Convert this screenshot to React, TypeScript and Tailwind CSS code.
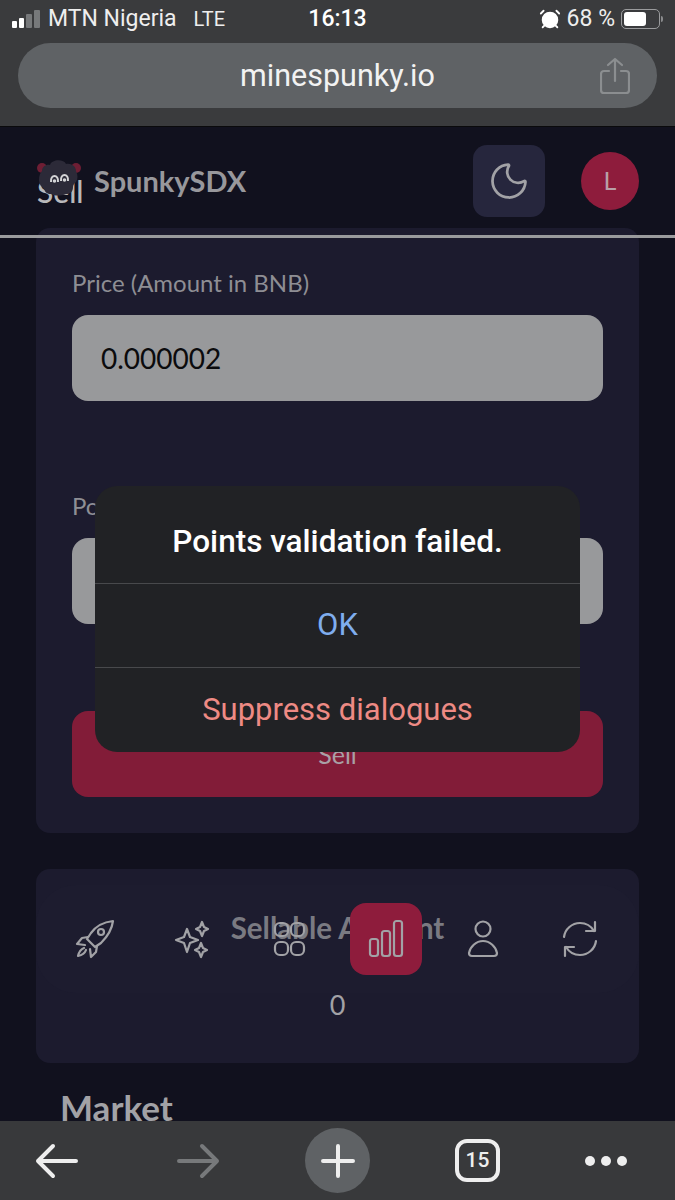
import { AlarmClock, Moon } from "lucide-react";

const ios = "font-['Roboto',sans-serif]";
const app = "font-['Lato',sans-serif]";

function Signal() {
  return (
    <div className="flex items-end gap-[2px]">
      <span className="h-[7px] w-[5px] rounded-[1px] bg-white" />
      <span className="h-[10px] w-[5px] rounded-[1px] bg-white" />
      <span className="h-[14px] w-[6px] rounded-[1px] bg-[#77797b]" />
      <span className="h-[18px] w-[6px] rounded-[1px] bg-[#77797b]" />
    </div>
  );
}

function Battery() {
  return (
    <div className="flex items-center gap-[1px]">
      <div className="flex h-[20px] w-[39px] items-center rounded-[5px] border border-[#9a9b9d] p-[2px]">
        <div className="h-full w-[68%] rounded-[3px] bg-white" />
      </div>
      <span className="h-[6px] w-[2px] rounded-r-sm bg-[#8a8b8d]" />
    </div>
  );
}

function ShareIcon() {
  return (
    <svg width="30" height="38" viewBox="0 0 30 38" fill="none" stroke="#8b8e90" strokeWidth="2.2" strokeLinecap="round" strokeLinejoin="round">
      <path d="M9 14H4a3 3 0 0 0-3 3v16a3 3 0 0 0 3 3h22a3 3 0 0 0 3-3V17a3 3 0 0 0-3-3h-5" />
      <path d="M15 24V2M8 8l7-6 7 6" />
    </svg>
  );
}

// the "Sell" word pokes out from under the sheep in the reference
function Logo() {
  return (
    <div className="relative h-[46px] w-[46px]">
      <span className={`${app} absolute -bottom-[2px] left-[1px] text-[30px] font-medium leading-none text-[#b9b9bb]`}>Sell</span>
      <svg className="absolute left-0 top-0" width="46" height="46" viewBox="0 0 46 46">
        <circle cx="6" cy="10" r="5" fill="#6e1e34" />
        <circle cx="40" cy="10" r="5" fill="#6e1e34" />
        <path d="M6 13c0-5 5-7 8-6 2-6 14-6 16-1 5-1 10 2 10 7 2 4 2 8 0 11-2 2-3 3-3 5 0 5-3 7-7 7-5 2-11 2-15 0-4 0-6-2-7-5-3-2-5-5-5-9 0-4 1-7 3-9z" fill="#2c2a38" />
        <path d="M15 24c-1-8 8-8 7 0M25 23c-1-8 8-8 7 0" fill="none" stroke="#d4d4d6" strokeWidth="2" />
        <circle cx="18.5" cy="23" r="1.8" fill="#d4d4d6" />
        <circle cx="28.5" cy="22" r="1.8" fill="#d4d4d6" />
      </svg>
    </div>
  );
}

function NavIcon({ children }: { children: React.ReactNode }) {
  return (
    <svg width="40" height="40" viewBox="0 0 40 40" fill="none" stroke="#a2a2a6" strokeWidth="2.2" strokeLinecap="round" strokeLinejoin="round">
      {children}
    </svg>
  );
}

const navItems = [
  <NavIcon key="rocket">
    <path d="M38 2c-9 1-17 5-22 12l-4 6 8 8 6-4c6-6 11-14 12-22z" />
    <circle cx="26" cy="13" r="3" />
    <path d="M13 18l-6 1-5 6 8 1M22 27l-1 6-5 5-1-8M9 29c-3 1-5 4-6 8 4-1 7-3 8-6" />
  </NavIcon>,
  <NavIcon key="sparkles">
    <path d="M15 10l3 8 8 3-8 3-3 9-3-9-8-3 8-3 3-8z" />
    <path d="M30 3l2 5 4 2-4 2-2 5-2-5-4-2 4-2 2-5z" />
    <path d="M29 24l2 5 4 2-4 2-2 5-2-5-4-2 4-2 2-5z" />
  </NavIcon>,
  <NavIcon key="grid">
    <rect x="6" y="4" width="13" height="13" rx="5" />
    <rect x="22" y="4" width="13" height="13" rx="5" />
    <rect x="6" y="23" width="13" height="13" rx="5" />
    <rect x="22" y="23" width="13" height="13" rx="5" />
  </NavIcon>,
  <NavIcon key="chart">
    <rect x="4" y="20" width="8" height="17" rx="2.5" />
    <rect x="16" y="12" width="8" height="25" rx="2.5" />
    <rect x="28" y="2" width="8" height="35" rx="2.5" />
  </NavIcon>,
  <NavIcon key="user">
    <circle cx="20" cy="10" r="7.5" />
    <path d="M20 22c-7 0-13 6-14 12 0 2 1 3 3 3h22c2 0 3-1 3-3-1-6-7-12-14-12z" />
  </NavIcon>,
  <NavIcon key="refresh">
    <path d="M4 18C5 10 12 4 20 4c6 0 11 3 14 8" />
    <path d="M35 3v9h-9" />
    <path d="M36 22c-1 8-8 14-16 14-6 0-11-3-14-8" />
    <path d="M5 37v-9h9" />
  </NavIcon>,
];

function Field({ label, value }: { label: string; value: string }) {
  return (
    <div>
      <div className={`${app} h-[28px] text-[24px] leading-[28px] text-[#8e8e94]`}>{label}</div>
      <div className="mt-[18px] flex h-[86px] items-center rounded-[16px] bg-[#98999b] px-[29px]">
        <span className={`${app} text-[28px] text-[#0b0b0d]`}>{value}</span>
      </div>
    </div>
  );
}

function Dialog() {
  return (
    <div className={`${ios} absolute left-[95px] top-[486px] flex h-[266px] w-[485px] flex-col rounded-[22px] bg-[#212225]`}>
      <div className="flex h-[98px] items-center justify-center border-b border-[#48494c] pt-[15px] text-[31.5px] font-medium text-white">
        Points validation failed.
      </div>
      <div className="flex h-[84px] items-center justify-center border-b border-[#48494c] text-[31px] text-[#7fadee]">
        OK
      </div>
      <div className="flex flex-1 items-center justify-center text-[31px] text-[#ee8a84]">Suppress dialogues</div>
    </div>
  );
}

export default function App() {
  return (
    <div className="relative flex h-[1200px] w-[675px] flex-col overflow-hidden bg-[#11111e]">
      <div className={`${ios} h-[126px] shrink-0 bg-[#3a3b3d] text-white`}>
        <div className="grid h-[36px] grid-cols-[1fr_auto_1fr] items-center px-[12px] pt-[2px]">
          <div className="flex items-center gap-[8px] text-[23px] text-[#eeeeee]">
            <Signal />
            <span>MTN Nigeria</span>
            <span className="ml-[9px] text-[20px]">LTE</span>
          </div>
          <div className="text-[23px] font-medium">16:13</div>
          <div className="flex items-center justify-end gap-[6px] text-[23px] text-[#eeeeee]">
            <AlarmClock size={22} fill="white" stroke="white" strokeWidth={2} />
            <span>68 %</span>
            <Battery />
          </div>
        </div>
        <div className="relative mx-[18px] mt-[7px] flex h-[65px] items-center justify-center rounded-full bg-[#5f6265] text-[30.5px] text-[#f2f2f2]">
          minespunky.io
          <div className="absolute right-[27px] top-[14px]">
            <ShareIcon />
          </div>
        </div>
      </div>
      <div className="h-px shrink-0 bg-[#0a0a0c]" />

      <div className="flex h-[108px] shrink-0 items-center justify-between px-[36px]">
        <div className="flex items-center gap-[12px]">
          <Logo />
          <span className={`${app} text-[29px] font-bold text-[#98989c]`}>SpunkySDX</span>
        </div>
        <div className="flex items-center gap-[36px]">
          <div className="flex h-[72px] w-[72px] items-center justify-center rounded-[14px] bg-[#26263d]">
            <Moon size={44} stroke="#a2a2a6" strokeWidth={1.5} />
          </div>
          <div className={`${app} flex h-[58px] w-[58px] items-center justify-center rounded-full bg-[#8e1c3c] text-[25px] text-[#b9a0a8]`}>
            L
          </div>
        </div>
      </div>

      <div className="relative z-10 h-[3px] shrink-0 bg-[#9a9b9d]" />

      <main className="-mt-[10px] flex flex-col px-[36px]">
        <section className="rounded-[14px] bg-[#1c1b2e] px-[36px] pb-[36px] pt-[41px]">
          <Field label="Price (Amount in BNB)" value="0.000002" />
          <div className="mt-[91px]">
            <Field label="Points" value="" />
          </div>
          <div className={`${app} mt-[87px] flex h-[86px] items-end justify-center rounded-[16px] bg-[#821c38] pb-[24px] text-[25px] text-[#a9a0a6]`}>
            Sell
          </div>
        </section>

        <section className="mt-[36px] flex h-[194px] flex-col items-center rounded-[14px] bg-[#1c1b2e] pt-[41px]">
          <div className={`${app} text-[29.5px] font-bold leading-[36px] text-[#98989c]`}>Sellable Amount</div>
          <div className={`${app} mt-[41px] text-[27px] leading-[36px] text-[#a2a2a6]`}>0</div>
        </section>

        <h2 className={`${app} mt-[24px] pl-[24px] text-[35px] font-bold leading-[40px] text-[#a2a2a6]`}>Market</h2>
      </main>

      <div className="absolute left-[36px] top-[885px] flex h-[108px] w-[603px] items-center gap-[25px] rounded-[40px] bg-[#1f1e32]/25 pl-[23px]">
        {navItems.map((icon, i) => (
          <div
            key={i}
            className={`flex h-[72px] w-[72px] items-center justify-center rounded-[16px] ${i === 3 ? "bg-[#8e1c3c]" : ""}`}
          >
            {icon}
          </div>
        ))}
      </div>

      <Dialog />

      <div className={`${ios} absolute bottom-0 left-0 flex h-[79px] w-[675px] items-center bg-[#38393b]`}>
        <div className="flex w-[79px] justify-end">
          <svg width="44" height="36" viewBox="0 0 44 36" fill="none" stroke="#eeeeee" strokeWidth="4" strokeLinecap="round" strokeLinejoin="round">
            <path d="M41 18H3M18 3 3 18l15 15" />
          </svg>
        </div>
        <div className="ml-[97px] flex w-[44px]">
          <svg width="44" height="36" viewBox="0 0 44 36" fill="none" stroke="#77797b" strokeWidth="4" strokeLinecap="round" strokeLinejoin="round">
            <path d="M3 18h38M26 3l15 15-15 15" />
          </svg>
        </div>
        <div className="ml-[85px] flex h-[65px] w-[65px] items-center justify-center rounded-full bg-[#5f6265]">
          <svg width="34" height="34" viewBox="0 0 34 34" fill="none" stroke="#eeeeee" strokeWidth="4" strokeLinecap="round">
            <path d="M17 2v30M2 17h30" />
          </svg>
        </div>
        <div className="ml-[85px] flex h-[43px] w-[45px] items-center justify-center rounded-[12px] border-[4px] border-[#eeeeee] text-[21px] font-medium text-[#eeeeee]">
          15
        </div>
        <div className="ml-[85px] flex gap-[6px]">
          <span className="h-[10px] w-[10px] rounded-full bg-[#eeeeee]" />
          <span className="h-[10px] w-[10px] rounded-full bg-[#eeeeee]" />
          <span className="h-[10px] w-[10px] rounded-full bg-[#eeeeee]" />
        </div>
      </div>
    </div>
  );
}
